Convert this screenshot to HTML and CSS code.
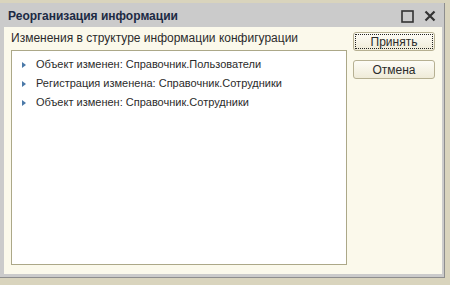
FILE: index.html
```html
<!DOCTYPE html>
<html lang="ru">

<head>
    <meta charset="UTF-8">
    <meta name="viewport" content="width=device-width, initial-scale=1.0">
    <title>Реорганизация информации</title>
    <link rel="stylesheet" href="styles.css">
</head>

<body>
    <div class="window">
        <div class="title-bar">
            <span class="title">Реорганизация информации</span>
            <div class="title-buttons">
                <svg class="btn-max" width="13" height="13" viewBox="0 0 13 13">
                    <rect x="1" y="1" width="11" height="11" fill="none" stroke="#333" stroke-width="1.6"/>
                </svg>
                <svg class="btn-close" width="12" height="12" viewBox="0 0 12 12">
                    <path d="M1.5 1.5 L10.5 10.5 M10.5 1.5 L1.5 10.5" stroke="#333" stroke-width="2.2"/>
                </svg>
            </div>
        </div>

        <div class="content">
            <div class="main">
                <div class="caption">Изменения в структуре информации конфигурации</div>
                <ul class="tree">
                    <li><span class="arrow"></span>Объект изменен: Справочник.Пользователи</li>
                    <li><span class="arrow"></span>Регистрация изменена: Справочник.Сотрудники</li>
                    <li><span class="arrow"></span>Объект изменен: Справочник.Сотрудники</li>
                </ul>
            </div>
            <div class="actions">
                <button class="btn default"><span>Принять</span></button>
                <button class="btn">Отмена</button>
            </div>
        </div>
    </div>
</body>

</html>
```

FILE: styles.css
```css
html, body {
    margin: 0;
    height: 100%;
}

body {
    background-color: #d9d4bd;
    font-family: "Liberation Sans", Arial, sans-serif;
    font-size: 12px;
    color: #2b2b2b;
    padding: 3px 5px 8px 0;
    box-sizing: border-box;
}

.window {
    height: 274px;
    background-color: #cbcbcb;
    border-right: 1px solid #8e8e8e;
    border-bottom: 1px solid #8e8e8e;
    display: flex;
    flex-direction: column;
}

.title-bar {
    height: 24px;
    display: flex;
    align-items: center;
    justify-content: space-between;
    padding: 0 8px 0 8px;
}

.title {
    font-weight: bold;
    font-size: 12px;
    color: #1c2a44;
    padding-top: 1px;
}

.title-buttons {
    display: flex;
    align-items: center;
    gap: 10px;
    padding-top: 2px;
}

.content {
    flex: 1;
    margin: 0 2px 3px 4px;
    background-color: #fbf9eb;
    display: flex;
    padding: 4px 0 0 6px;
}

.main {
    display: flex;
    flex-direction: column;
    width: 337px;
}

.caption {
    height: 14px;
    line-height: 14px;
    margin-bottom: 5px;
    padding-left: 1px;
}

.tree {
    list-style: none;
    margin: 0 0 9px 1px;
    padding: 4px 0 0 0;
    flex: 1;
    background-color: #fff;
    border: 1px solid #aca888;
    font-size: 11px;
}

.tree li {
    height: 19px;
    line-height: 19px;
    padding-left: 10px;
    display: flex;
    align-items: center;
}

.arrow {
    width: 0;
    height: 0;
    border-top: 3.5px solid transparent;
    border-bottom: 3.5px solid transparent;
    border-left: 4px solid #4a79a8;
    margin-right: 10px;
}

.actions {
    display: flex;
    flex-direction: column;
    gap: 9px;
    margin-left: 6px;
    padding-top: 1px;
}

.btn {
    width: 82px;
    height: 19px;
    padding: 0;
    font-family: "Liberation Sans", Arial, sans-serif;
    font-size: 12px;
    color: #2b2b2b;
    border: 1px solid #b6b092;
    border-radius: 3px;
    background: linear-gradient(#fdfcf6, #efebd8);
    display: flex;
    align-items: center;
    justify-content: center;
}

.btn.default {
    padding: 1px;
}

.btn.default span {
    flex: 1;
    align-self: stretch;
    display: flex;
    align-items: center;
    justify-content: center;
    border: 1px dotted #222;
}
```
